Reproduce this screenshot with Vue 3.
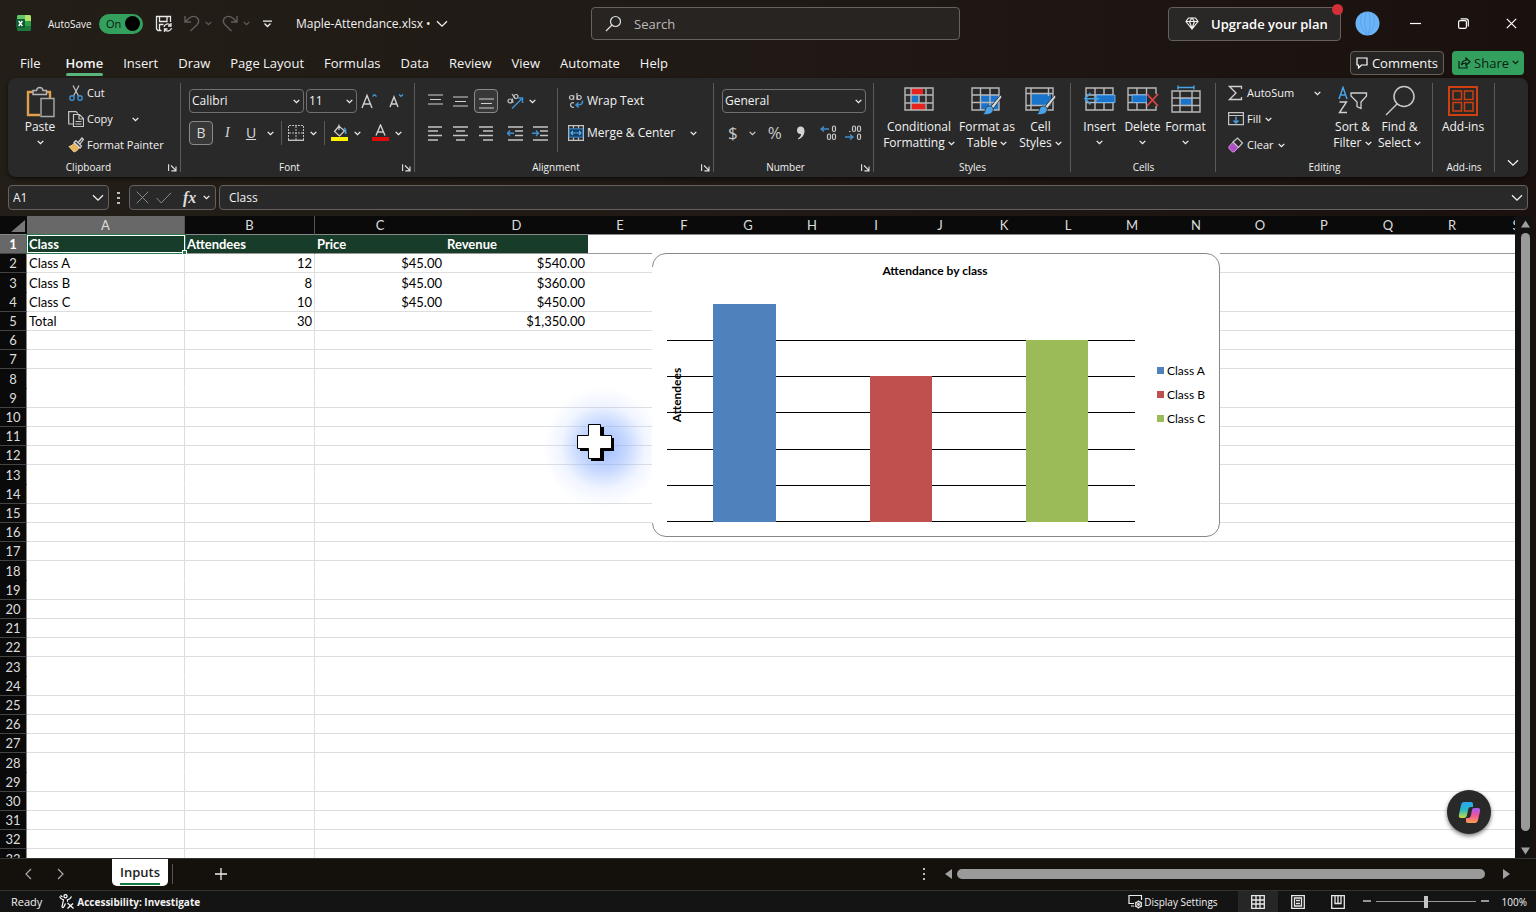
<script setup>
import { h, ref } from 'vue'

const Chev = () => h('svg', { class: 'chev', width: 7, height: 5, viewBox: '0 0 7 5', 'aria-hidden': 'true' }, [
  h('path', { d: 'M.7.9 3.5 3.7 6.3.9', fill: 'none', stroke: 'currentColor', 'stroke-width': 1.3 })
])
const BigChev = () => h('svg', { class: 'chev', width: 12, height: 8, viewBox: '0 0 12 8', 'aria-hidden': 'true' }, [
  h('path', { d: 'M1 1.2 6 6.2 11 1.2', fill: 'none', stroke: 'currentColor', 'stroke-width': 1.3 })
])
const Launcher = () => h('button', { class: 'launcher', type: 'button', 'aria-label': 'More options' }, [
  h('svg', { width: 9, height: 9, viewBox: '0 0 9 9' }, [
    h('path', { d: 'M.6 8V1.2M3 2.5l4.6 4.6M8 3.4v4.5H3.4', fill: 'none', stroke: '#e4e4e4', 'stroke-width': 1.1 })
  ])
])

const tabs = ['File', 'Home', 'Insert', 'Draw', 'Page Layout', 'Formulas', 'Data', 'Review', 'View', 'Automate', 'Help']
const columns = 'ABCDEFGHIJKLMNOPQRS'.split('')
const data = [
  ['Class', 'Attendees', 'Price', 'Revenue'],
  ['Class A', '12', '$45.00', '$540.00'],
  ['Class B', '8', '$45.00', '$360.00'],
  ['Class C', '10', '$45.00', '$450.00'],
  ['Total', '30', '', '$1,350.00']
]
const rowCount = 33
const cell = (r, c) => (data[r - 1] && data[r - 1][c]) || ''

const gridY = [87, 123, 159, 196, 232, 268]
const bars = [
  { x: 61, y: 51, w: 63, color: '#4f81bd' },
  { x: 218, y: 123, w: 62, color: '#c0504d' },
  { x: 374, y: 87, w: 62, color: '#9bbb59' }
]
const legend = [
  { label: 'Class A', color: '#4f81bd', y: 118 },
  { label: 'Class B', color: '#c0504d', y: 142 },
  { label: 'Class C', color: '#9bbb59', y: 166 }
]
const autosave = ref(true)
const formula = ref('Class')
const nameBox = ref('A1')
const zoom = ref(50)
</script>

<template>
  <div class="app">
    <header class="titlebar">
      <div class="title-left">
        <svg class="logo" width="16" height="17" viewBox="0 0 16 17" aria-hidden="true">
          <rect x="1" y="0" width="14" height="16" rx="1.5" fill="#1d7a3c" />
          <path d="M1 1.500A1.500 1.500 0 0 1 2.500 0H9v6H1z" fill="#5fc46a" />
          <path d="M9 0h4.500A1.500 1.500 0 0 1 15 1.500V6H9z" fill="#b4e36c" />
          <path d="M9 6h6v5H9z" fill="#2f9e46" />
          <rect x="0" y="4" width="9" height="9" rx="1" fill="#0f5c33" />
          <path d="M2.700 6 6.300 11M6.300 6 2.700 11" stroke="#fff" stroke-width="1.400" />
        </svg>
        <label class="autosave">
          <span>AutoSave</span>
          <input v-model="autosave" type="checkbox" />
          <span class="toggle"><span>On</span><i></i></span>
        </label>
        <button class="ib save" aria-label="Save">
          <svg width="18" height="18" viewBox="0 0 18 18" fill="none" stroke="#e8e8e8" stroke-width="1.300">
            <path d="M6.500 15.500H3L1.500 14V1.500h14V7M4.500 1.500v5h7.500v-5M4.500 15.500v-6h4" />
            <path d="M9 12a3.600 3.600 0 0 1 6.500-1.500M16 8v3h-3M16.500 13a3.600 3.600 0 0 1-6.500 1.500M9.500 17v-3h3" />
          </svg>
        </button>
        <button class="ib dim undo" aria-label="Undo">
          <svg width="16" height="17" viewBox="0 0 16 17" fill="none" stroke="currentColor" stroke-width="1.400">
            <path d="M1 1v6h6M1.500 6.500 5 3.300c3-2.800 6.500-2.300 8.300-.3 1.800 2 1.500 4.800-.3 6.700L6.500 16" />
          </svg>
          <Chev />
        </button>
        <button class="ib dim redo" aria-label="Redo">
          <svg width="16" height="17" viewBox="0 0 16 17" fill="none" stroke="currentColor" stroke-width="1.400">
            <path d="M15 1v6H9M14.500 6.500 11 3.300C8 .5 4.500 1 2.700 3c-1.800 2-1.500 4.800.3 6.700L9.500 16" />
          </svg>
          <Chev />
        </button>
        <button class="ib customize" aria-label="Customize toolbar">
          <svg width="9" height="8" viewBox="0 0 9 8" fill="none" stroke="#eee" stroke-width="1.300"><path d="M0 1.200h9M1.500 3.500l3 3 3-3" /></svg>
        </button>
        <button class="ib filename">Maple-Attendance.xlsx • <BigChev /></button>
      </div>
      <label class="search">
        <svg width="17" height="17" viewBox="0 0 17 17" fill="none" stroke="#ddd" stroke-width="1.200" aria-hidden="true"><circle cx="10.500" cy="6.500" r="5" /><path d="M7 10 1 16" /></svg>
        <input type="search" placeholder="Search" aria-label="Search" />
      </label>
      <div class="title-right">
        <button class="upgrade">
          <svg width="14" height="13" viewBox="0 0 14 13" fill="none" stroke="#eee" stroke-width="1.200"><path d="M3.500 1h7L13 4.500 7 12 1 4.500zM1 4.500h12M4.500 4.500 7 11.500l2.500-7M4.500 4.500 7 1l2.500 3.500" /></svg>
          Upgrade your plan
          <i class="dot"></i>
        </button>
        <button class="avatar" aria-label="Account">
          <svg width="25" height="25" viewBox="0 0 25 25"><circle cx="12.500" cy="12.500" r="12" fill="#6cb4f8" /><path d="M12.500 24C5 18 4 8 7.500 2.500M12.500 24C9 16 9.500 8 11 1M12.500 24C16 16 15.500 8 14 1M12.500 24C20 18 21 8 17.500 2.500" fill="none" stroke="#5ba3ec" stroke-width="1" /></svg>
        </button>
        <button class="win" aria-label="Minimize"><svg width="11" height="11" viewBox="0 0 11 11"><path d="M0 5.500h11" stroke="#fff" stroke-width="1.200" /></svg></button>
        <button class="win" aria-label="Restore"><svg width="11" height="11" viewBox="0 0 11 11" fill="none" stroke="#fff" stroke-width="1.200"><rect x=".6" y="2.600" width="7.800" height="7.800" rx="1.500" /><path d="M2.600.8H8a2.300 2.300 0 0 1 2.300 2.300v5.400" /></svg></button>
        <button class="win" aria-label="Close"><svg width="11" height="11" viewBox="0 0 11 11"><path d="m.8.8 9.400 9.400M10.200.8.8 10.200" stroke="#fff" stroke-width="1.200" /></svg></button>
      </div>
    </header>

    <nav class="tabs">
      <button v-for="t in tabs" :key="t" :class="{ active: t === 'Home', file: t === 'File' }">{{ t }}</button>
      <span class="grow"></span>
      <button class="comments">
        <svg width="12" height="12" viewBox="0 0 12 12" fill="none" stroke="#fff" stroke-width="1.200"><path d="M1 1h10v7H5.500L2.500 11V8H1z" /></svg>
        Comments
      </button>
      <button class="share">
        <svg width="13" height="12" viewBox="0 0 13 12" fill="none" stroke="#0b1d12" stroke-width="1.200"><path d="M1 4v7h8V9M3.500 8c.3-3 2-4.500 4.500-4.500V1l4 3.700-4 3.600V6C6 6 4.500 6.500 3.500 8z" /></svg>
        Share <Chev />
      </button>
    </nav>

    <section class="ribbon" aria-label="Home ribbon">
      <div class="group g-clip">
        <div class="body">
          <button class="big paste">
            <svg width="29" height="32" viewBox="0 0 29 32" fill="none">
              <path d="M8 6H2v23h12M20 6h4v6" stroke="#e0a04c" stroke-width="2.400" />
              <path d="M7 8.500V4.500h3.500C11 .5 16.500.5 17 4.500h3.500v4z" stroke="#b8b8b8" stroke-width="1.400" fill="#333" />
              <path d="M15 12.500h13v18H15z" stroke="#aaa" stroke-width="1.400" fill="#292929" />
            </svg>
            <span>Paste</span><Chev />
          </button>
          <div class="stack">
            <button class="row">
              <svg width="16" height="16" viewBox="0 0 16 16" fill="none"><path d="M5 .5 10.500 11M11 .5 5.500 11" stroke="#c8c8c8" stroke-width="1.200" /><circle cx="4" cy="13" r="2.200" stroke="#3f8fcf" stroke-width="1.400" /><circle cx="12" cy="13" r="2.200" stroke="#3f8fcf" stroke-width="1.400" /></svg>
              Cut
            </button>
            <button class="row">
              <svg width="16" height="16" viewBox="0 0 16 16" fill="none" stroke="#c8c8c8" stroke-width="1.200"><path d="M5 13H.7V.7H8l2 2" /><path d="M5.500 3.500h6l4 4v8h-10zM11 3.500v4.500h4.500M7.500 10.500h6M7.500 13h6" /></svg>
              Copy <Chev />
            </button>
            <button class="row">
              <svg width="16" height="16" viewBox="0 0 16 16" fill="none"><path d="M1 9.500 6 15c2-.5 4.500-2.500 5.500-4.500L6.500 6C5 8 3 9 1 9.500z" fill="#e8b458" stroke="#f0cf93" /><path d="m6 5.500 6 5.500 1.500-2L8 3.500zM10.500 5 14 1l1.500 1.500L12 7" stroke="#d8d8d8" stroke-width="1.200" fill="#444" /></svg>
              Format Painter
            </button>
          </div>
        </div>
        <footer>Clipboard<Launcher /></footer>
      </div>

      <div class="group g-font">
        <div class="body col">
          <div class="line">
            <label class="pick w114"><select aria-label="Font"><option>Calibri</option></select><Chev /></label>
            <label class="pick w50"><select aria-label="Font size"><option>11</option></select><Chev /></label>
            <button class="ib growf" aria-label="Increase font size"><svg width="16" height="16" viewBox="0 0 16 16" fill="none"><path d="M1 15 6 2.500 11 15M2.800 11h6.400" stroke="#d0d0d0" stroke-width="1.400" /><path d="m11.500 3.500 2-2 2 2" stroke="#4a9bd8" stroke-width="1.200" /></svg></button>
            <button class="ib shrinkf" aria-label="Decrease font size"><svg width="15" height="16" viewBox="0 0 15 16" fill="none"><path d="m1 14 4-10 4 10M2.500 11h5" stroke="#d0d0d0" stroke-width="1.400" /><path d="m10 1.500 2 2 2-2" stroke="#4a9bd8" stroke-width="1.200" /></svg></button>
          </div>
          <div class="line">
            <button class="sq on"><span class="bold">B</span></button>
            <button class="ib it">I</button>
            <button class="ib ul"><u>U</u></button>
            <button class="ib" aria-label="Underline options"><Chev /></button>
            <i class="vs"></i>
            <button class="ib bord" aria-label="Borders"><svg width="16" height="16" viewBox="0 0 16 16" fill="none" stroke="#c0c0c0"><path d="M.5 15V.5h15V15M8 1v14M1 8h14" stroke-dasharray="2 1" /><path d="M0 15.300h16" stroke-width="1.400" /></svg><Chev /></button>
            <i class="vs"></i>
            <button class="ib fillc" aria-label="Fill color"><svg width="17" height="18" viewBox="0 0 17 18" fill="none"><path d="M8 2 3.500 7.500l5 4.500 5-5zM8 2V.5M8 2v4" stroke="#d0d0d0" stroke-width="1.200" /><path d="M13 4c1.500 1 2 3 1.500 6" stroke="#4a9bd8" stroke-width="1.600" /><path d="M0 13h17v4H0z" fill="#fff200" /></svg><Chev /></button>
            <button class="ib fontc" aria-label="Font color"><svg width="17" height="18" viewBox="0 0 17 18" fill="none"><path d="M4 11.500 8.500 1 13 11.500M5.500 8h6" stroke="#d0d0d0" stroke-width="1.400" /><path d="M0 13h17v4H0z" fill="#e00b0b" /></svg><Chev /></button>
          </div>
        </div>
        <footer>Font<Launcher /></footer>
      </div>

      <div class="group g-align">
        <div class="body">
          <div class="col aligns">
            <div class="line">
              <button class="sq high" aria-label="Top align"><svg width="15" height="15" viewBox="0 0 15 15" stroke="#d0d0d0" stroke-width="1.200"><path d="M0 1h15M2 5.500h11M0 10h15" /></svg></button>
              <button class="sq" aria-label="Middle align"><svg width="15" height="15" viewBox="0 0 15 15" stroke="#d0d0d0" stroke-width="1.200"><path d="M0 3h15M2 7.500h11M0 12h15" /></svg></button>
              <button class="sq on" aria-label="Bottom align"><svg width="15" height="15" viewBox="0 0 15 15" stroke="#d0d0d0" stroke-width="1.200"><path d="M0 5h15M2 9.500h11M0 14h15" /></svg></button>
              <button class="sq wide" aria-label="Orientation"><svg width="17" height="16" viewBox="0 0 17 16" fill="none"><g stroke="#c8c8c8" stroke-width="1.200"><circle cx="3" cy="8" r="2" /><path d="M5.300 5.500 6 10M5 1l3.500 5" /><circle cx="9" cy="3.500" r="2" /></g><path d="m5 15.500 10-10M10.500 5H15.500v5" stroke="#3f8fcf" stroke-width="1.500" /></svg><Chev /></button>
            </div>
            <div class="line">
              <button class="sq" aria-label="Align left"><svg width="15" height="15" viewBox="0 0 15 15" stroke="#c4c4c4" stroke-width="1.600"><path d="M0 1h14M0 5h10M0 9.500h14M0 14h10" /></svg></button>
              <button class="sq" aria-label="Center"><svg width="15" height="15" viewBox="0 0 15 15" stroke="#c4c4c4" stroke-width="1.600"><path d="M0 1h15M3 5h9M0 9.500h15M3 14h9" /></svg></button>
              <button class="sq" aria-label="Align right"><svg width="15" height="15" viewBox="0 0 15 15" stroke="#c4c4c4" stroke-width="1.600"><path d="M1 1h14M5 5h10M1 9.500h14M5 14h10" /></svg></button>
              <button class="sq ind" aria-label="Decrease indent"><svg width="16" height="15" viewBox="0 0 16 15" fill="none" stroke="#c4c4c4" stroke-width="1.600"><path d="M1 1h15M8 5h8M8 9.500h8M1 14h15" /><path d="M0 7.300h7M3 4.500.5 7.300 3 10" stroke="#3f8fcf" stroke-width="1.400" /></svg></button>
              <button class="sq" aria-label="Increase indent"><svg width="16" height="15" viewBox="0 0 16 15" fill="none" stroke="#c4c4c4" stroke-width="1.600"><path d="M1 1h15M8 5h8M8 9.500h8M1 14h15" /><path d="M0 7.300h7M4 4.500l2.500 2.800L4 10" stroke="#3f8fcf" stroke-width="1.400" /></svg></button>
            </div>
          </div>
          <i class="vs tall"></i>
          <div class="col wraps">
            <button class="row">
              <svg width="16" height="16" viewBox="0 0 16 16" fill="none"><g stroke="#c8c8c8" stroke-width="1.200"><circle cx="3.500" cy="4.500" r="2" /><path d="M5.700 2.300v4.500M9 0v7M6 10a2.300 2.300 0 1 0 0 4" /><circle cx="11.200" cy="4.500" r="2" /></g><path d="M14.500 7.500c.5 3.500-1.500 4.500-6 4.500M10.500 9.500 8 12l2.500 2.500" stroke="#3f8fcf" stroke-width="1.600" /></svg>
              Wrap Text
            </button>
            <button class="row merge">
              <svg width="16" height="16" viewBox="0 0 16 16" fill="none"><path d="M.6.6h14.800v14.800H.6zM5.500.6v3M10.500.6v3M5.500 12.500v3M10.500 12.500v3" stroke="#c4c4c4" stroke-width="1.200" /><path d="M1.200 3.800h13.600v8.400H1.200z" fill="#123f63" stroke="#3f8fcf" stroke-width="1" /><path d="M3 8h10M5 6 3 8l2 2M11 6l2 2-2 2" stroke="#5cb0ee" stroke-width="1.200" /></svg>
              Merge &amp; Center <Chev />
            </button>
          </div>
        </div>
        <footer>Alignment<Launcher /></footer>
      </div>

      <div class="group g-num">
        <div class="body col">
          <label class="pick w144"><select aria-label="Number format"><option>General</option></select><Chev /></label>
          <div class="line">
            <button class="ib cur">$<Chev /></button>
            <button class="ib pct">%</button>
            <button class="ib comma" aria-label="Comma style"><svg width="9" height="14" viewBox="0 0 9 14"><path d="M4.500.5C7 .5 8.500 2 8.500 5c0 4-2.500 7-6 8.500L2 12.300c2-1 3-2.500 3-4.300C2.500 8.300 1 6.500 1 4.200 1 2 2.500.5 4.500.5z" fill="#d4d4d4" /></svg></button>
            <i class="vs"></i>
            <button class="ib dec" aria-label="Increase decimal"><svg width="17" height="16" viewBox="0 0 17 16" fill="none"><path d="M9 4H1M4 1.500 1 4l3 2.500" stroke="#3f8fcf" stroke-width="1.400" /><g stroke="#c8c8c8" stroke-width="1.200"><rect x="12.500" y="1" width="3" height="5.500" rx="1.500" /><rect x="7.500" y="9" width="3" height="5.500" rx="1.500" /><rect x="12.500" y="9" width="3" height="5.500" rx="1.500" /></g></svg></button>
            <button class="ib dec" aria-label="Decrease decimal"><svg width="17" height="16" viewBox="0 0 17 16" fill="none"><path d="M0 12h8M5 9.500 8 12l-3 2.500" stroke="#3f8fcf" stroke-width="1.400" /><g stroke="#c8c8c8" stroke-width="1.200"><rect x="12.500" y="1" width="3" height="5.500" rx="1.500" /><rect x="7.500" y="1" width="3" height="5.500" rx="1.500" /><path d="M4 6.500h1.500" /><rect x="12.500" y="9" width="3" height="5.500" rx="1.500" /></g></svg></button>
          </div>
        </div>
        <footer>Number<Launcher /></footer>
      </div>

      <div class="group g-styles">
        <div class="body">
          <button class="big w80">
            <svg width="30" height="26" viewBox="0 0 30 26"><path d="M1 2h28v22H1z" fill="#2f2f2f" /><path d="M7 2h12v7H7zM7 17h14v7H7z" fill="#e8221c" /><path d="M7 9h8v8H7z" fill="#1a74cc" /><path d="M1 2h28v22H1zM1 9h28M1 17h28M7 2v22M22 2v22M15 9v8" fill="none" stroke="#b8b8b8" stroke-width="1.400" /></svg>
            <span>Conditional<br />Formatting <Chev /></span>
          </button>
          <button class="big w56">
            <svg width="32" height="30" viewBox="0 0 32 30" fill="none"><path d="M10 9h18v15H10z" fill="#1a74cc" /><path d="M1 2h27v22H1zM1 9h27M1 16.500h27M9.500 2v22M19 2v22" stroke="#b8b8b8" stroke-width="1.400" /><path d="m29.500 9-10 12 2.500 2 9-12z" fill="#d8d8d8" stroke="#292929" stroke-width=".8" /><path d="M18 20c3 0 5 2 4 5s-5 4-11 3.500c3-1 2.500-3 3.500-5.500.7-2 2-3 3.500-3z" fill="#4aa3e6" stroke="#292929" stroke-width=".8" /></svg>
            <span>Format as<br />Table <Chev /></span>
          </button>
          <button class="big w48">
            <svg width="32" height="30" viewBox="0 0 32 30" fill="none"><path d="M6 8h20v12H6z" fill="#1a74cc" /><path d="M1 2h27v22H1zM1 7.500h27M1 19.500h20M6 2v22M23.500 2v8" stroke="#b8b8b8" stroke-width="1.400" /><path d="m29.500 9-10 12 2.500 2 9-12z" fill="#d8d8d8" stroke="#292929" stroke-width=".8" /><path d="M18 20c3 0 5 2 4 5s-5 4-11 3.500c3-1 2.500-3 3.500-5.500.7-2 2-3 3.500-3z" fill="#4aa3e6" stroke="#292929" stroke-width=".8" /></svg>
            <span>Cell<br />Styles <Chev /></span>
          </button>
        </div>
        <footer>Styles</footer>
      </div>

      <div class="group g-cells">
        <div class="body">
          <button class="big w44">
            <svg width="32" height="26" viewBox="0 0 32 26" fill="none"><path d="M2 2h27v22H2zM2 9h27M2 16.500h27M11 2v22M20 2v22" stroke="#b8b8b8" stroke-width="1.400" /><path d="M12 9h19v7.500H12z" fill="#1a74cc" stroke="#7cc0f5" stroke-width=".8" /><path d="M15 12.700H1M6.500 7 1 12.700l5.500 5.700" stroke="#4aa3e6" stroke-width="1.600" /></svg>
            <span>Insert</span><Chev />
          </button>
          <button class="big w44">
            <svg width="32" height="26" viewBox="0 0 32 26" fill="none"><path d="M1 2h28v22H1zM1 9h28M1 16.500h28M10 2v22M19.500 2v22" stroke="#b8b8b8" stroke-width="1.400" /><path d="M5 9h15v7.500H5z" fill="#1a74cc" stroke="#7cc0f5" stroke-width=".8" /><path d="M20 8h12v12H20z" fill="#292929" /><path d="m20 8 11 12M31 8 20 20" stroke="#e04444" stroke-width="1.800" /></svg>
            <span>Delete</span><Chev />
          </button>
          <button class="big w44 fmt">
            <svg width="32" height="30" viewBox="0 0 32 30" fill="none"><path d="M8 2.500h16M8 .5v4M24 .5v4" stroke="#4aa3e6" stroke-width="1.400" /><path d="M10 13h12v7.500H10z" fill="#1a74cc" /><path d="M2 6h28v21H2zM2 13h28M2 20.500h28M10 6v21M22 6v21" stroke="#b8b8b8" stroke-width="1.400" /></svg>
            <span>Format</span><Chev />
          </button>
        </div>
        <footer>Cells</footer>
      </div>

      <div class="group g-edit">
        <div class="body">
          <div class="stack">
            <button class="row autosum">
              <svg width="16" height="16" viewBox="0 0 16 16" fill="none"><path d="M13.500 4V1.500h-12L8 8l-6.500 6.500h12V12" stroke="#d0d0d0" stroke-width="1.300" /></svg>
              AutoSum <Chev />
            </button>
            <button class="row">
              <svg width="16" height="16" viewBox="0 0 16 16" fill="none"><path d="M.6 1.600h14.800v12H.6zM.6 4.500h14.800" stroke="#c4c4c4" stroke-width="1.200" /><path d="M8 5.500v6.500M5.500 9.500 8 12l2.500-2.500" stroke="#4aa3e6" stroke-width="1.400" /></svg>
              Fill <Chev />
            </button>
            <button class="row">
              <svg width="16" height="16" viewBox="0 0 16 16" fill="none"><path d="m1 9.500 4-4.500 5.500 5.500L6 15H4.500L1 11.500z" fill="#b04fc4" stroke="#d98be6" /><path d="m5 5 4.500-4 5 5-4 4.500z" stroke="#c8c8c8" stroke-width="1.200" /></svg>
              Clear <Chev />
            </button>
          </div>
          <button class="big w48 sort">
            <svg width="30" height="28" viewBox="0 0 30 28" fill="none"><path d="m1 13 4-11.500L9 13M2.500 9h5" stroke="#4aa3e6" stroke-width="1.500" /><path d="M1.500 16h7L1.500 26.500h7.500" stroke="#d0d0d0" stroke-width="1.400" /><path d="M13 7h15.500v3L23 16v6.500l-4-2V16l-6-6z" stroke="#d0d0d0" stroke-width="1.300" /></svg>
            <span>Sort &amp;<br />Filter <Chev /></span>
          </button>
          <button class="big w48 find">
            <svg width="30" height="31" viewBox="0 0 30 31" fill="none" stroke="#c8c8c8" stroke-width="1.500"><circle cx="19" cy="11.500" r="10" /><path d="M12 19 1 30" /></svg>
            <span>Find &amp;<br />Select <Chev /></span>
          </button>
        </div>
        <footer>Editing</footer>
      </div>

      <div class="group g-add">
        <div class="body">
          <button class="big w60">
            <svg width="30" height="30" viewBox="0 0 30 30" fill="none" stroke="#cf3f10" stroke-width="1.500"><path d="M1 1h28v28H1z" stroke-width="2" /><path d="M5 5h8.500v8.500H5zM16.500 5H25v8.500h-8.500zM5 16.500h8.500V25H5zM16.500 16.500H25V25h-8.500z" /></svg>
            <span>Add-ins</span>
          </button>
        </div>
        <footer>Add-ins</footer>
      </div>
      <button class="ib collapse" aria-label="Collapse ribbon"><BigChev /></button>
    </section>

    <section class="fbar" aria-label="Formula bar">
      <div class="box namebox"><input v-model="nameBox" aria-label="Name box" /><BigChev /></div>
      <svg class="dots" width="3" height="12" viewBox="0 0 3 12" fill="#bbb" aria-hidden="true"><path d="M0 0h3v2H0zM0 5h3v2H0zM0 10h3v2H0z" /></svg>
      <div class="box fxbox">
        <button class="ib dim2" aria-label="Cancel"><svg width="13" height="13" viewBox="0 0 13 13"><path d="m.7.7 11.600 11.600M12.300.7.7 12.300" stroke="currentColor" /></svg></button>
        <button class="ib dim2" aria-label="Enter"><svg width="16" height="12" viewBox="0 0 16 12" fill="none"><path d="m.7 6 4.500 5L15 .8" stroke="currentColor" /></svg></button>
        <button class="ib fx">fx</button>
        <button class="ib" aria-label="Function list"><Chev /></button>
      </div>
      <div class="box finput"><input v-model="formula" aria-label="Formula" /><BigChev /></div>
    </section>

    <main class="work">
      <div class="sheet">
        <table>
          <colgroup><col class="c-h" /><col class="c-a" /><col class="c-b" /><col class="c-b" /><col class="c-d" /><col v-for="n in 15" :key="n" class="c-n" /></colgroup>
          <thead>
            <tr>
              <th class="corner" aria-label="Select all"><svg width="14" height="14" viewBox="0 0 14 14"><path d="M14 0v12H0z" fill="#777" /></svg></th>
              <th v-for="c in columns" :key="c" scope="col" :class="{ picked: c === 'A', edge: c === 'A' || c === 'B' }">{{ c }}</th>
            </tr>
          </thead>
          <tbody>
            <tr v-for="r in rowCount" :key="r" :class="{ head: r === 1 }">
              <th scope="row">{{ r }}</th>
              <td v-for="(c, i) in columns" :key="c" :class="{ num: r > 1 && i > 0, vline: i < 2 }">{{ cell(r, i) }}</td>
            </tr>
          </tbody>
        </table>
        <span class="selection"><i></i></span>
        <span class="glow"></span>
        <svg class="cursor" width="38" height="38" viewBox="0 0 38 38" aria-hidden="true">
          <path d="M14 3h13v11h10v13H27v10H14V27H3V14h11z" fill="#000" />
          <path d="M11.500.5h12v11h11v13h-11v10h-12v-10H.5v-13h11z" fill="#fff" stroke="#000" />
        </svg>
        <figure class="chart">
          <svg width="568" height="284" viewBox="0 0 568 284" role="img" aria-label="Attendance by class">
            <path d="M0 0h568v284H0z" fill="#fff" />
            <path d="M.5 14A13.500 13.500 0 0 1 14 .5h540A13.500 13.500 0 0 1 567.500 14v256a13.500 13.500 0 0 1-13.500 13.500H14A13.500 13.500 0 0 1 .5 270" fill="none" stroke="#888" />
            <path v-for="y in gridY" :key="y" :d="`M15 ${y}h468v1H15z`" fill="#000" />
            <rect v-for="b in bars" :key="b.x" :x="b.x" :y="b.y" :width="b.w" :height="269 - b.y" :fill="b.color" />
            <text class="ct" x="283" y="22" text-anchor="middle">Attendance by class</text>
            <text class="ct" x="-142" y="29" text-anchor="middle" transform="rotate(-90)">Attendees</text>
            <template v-for="l in legend" :key="l.label">
              <rect x="505" :y="l.y - 4" width="7" height="7" :fill="l.color" />
              <text class="cl" x="515" :y="l.y + 4">{{ l.label }}</text>
            </template>
          </svg>
        </figure>
        <button class="copilot" aria-label="Copilot">
          <svg width="23" height="23" viewBox="0 0 23 23">
            <defs>
              <linearGradient id="ca" x1="0" y1="0" x2="0" y2="1"><stop offset="0" stop-color="#2aa4f4" /><stop offset=".5" stop-color="#2cb8c4" /><stop offset="1" stop-color="#c8dc3c" /></linearGradient>
              <linearGradient id="cb" x1="0" y1="0" x2="0" y2="1"><stop offset="0" stop-color="#a45cf0" /><stop offset=".5" stop-color="#f0559a" /><stop offset="1" stop-color="#fba04c" /></linearGradient>
            </defs>
            <path d="M6 1h7c1.500 0 2 1 2 2v3h-2c-2 0-2.500 1-3 3l-1 5c-.5 2-1.500 3-3 3H3c-2 0-2.500-1.500-2-3.500L3 4c.5-2 1.500-3 3-3z" fill="url(#ca)" />
            <path d="M17 22h-7c-1.500 0-2-1-2-2v-3h2c2 0 2.500-1 3-3l1-5c.5-2 1.500-2 3-2h3c2 0 2.500 1.500 2 3.500L20 19c-.5 2-1.500 3-3 3z" fill="url(#cb)" />
          </svg>
        </button>
      </div>
      <div class="vscroll">
        <svg width="9" height="8" viewBox="0 0 9 8"><path d="M4.500.5 9 7.500H0z" fill="#a0a0a0" /></svg>
        <span class="thumb"></span>
        <svg class="down" width="9" height="8" viewBox="0 0 9 8"><path d="M4.500 7.500 9 .5H0z" fill="#a0a0a0" /></svg>
      </div>
    </main>

    <div class="sheettabs">
      <button class="ib nav" aria-label="Previous sheet"><svg width="7" height="12" viewBox="0 0 7 12" fill="none" stroke="#aaa" stroke-width="1.200"><path d="M6 1 1 6l5 5" /></svg></button>
      <button class="ib nav" aria-label="Next sheet"><svg width="7" height="12" viewBox="0 0 7 12" fill="none" stroke="#aaa" stroke-width="1.200"><path d="m1 1 5 5-5 5" /></svg></button>
      <button class="sheettab"><span>Inputs</span></button>
      <i class="tabsep"></i>
      <button class="ib add" aria-label="New sheet"><svg width="12" height="12" viewBox="0 0 12 12"><path d="M6 0v12M0 6h12" stroke="#eee" stroke-width="1.300" /></svg></button>
      <div class="hscroll">
        <svg width="3" height="12" viewBox="0 0 3 12" fill="#bbb"><path d="M0 0h2v2H0zM0 5h2v2H0zM0 10h2v2H0z" /></svg>
        <svg class="la" width="7" height="10" viewBox="0 0 7 10"><path d="M7 0v10L0 5z" fill="#a0a0a0" /></svg>
        <span class="hthumb"></span>
        <svg class="ra" width="7" height="10" viewBox="0 0 7 10"><path d="M0 0v10l7-5z" fill="#a0a0a0" /></svg>
      </div>
    </div>

    <footer class="status">
      <span class="ready">Ready</span>
      <button class="ib acc">
        <svg width="15" height="15" viewBox="0 0 15 15" fill="none" stroke="#fff" stroke-width="1.200"><circle cx="6.500" cy="2.200" r="1.600" /><path d="M.5 2.500c1 2.500 2.500 3 4 3.300L3 13c1 1.500 2 0 3.500-3.500M12.500 2.500c-1 2.500-2.500 3-4 3.300v2M8.500 9l6 5.500M14 9.500l-5.500 5M1.500 1.500 3.500 3" /></svg>
        Accessibility: Investigate
      </button>
      <span class="grow"></span>
      <button class="ib disp">
        <svg width="15" height="15" viewBox="0 0 15 15" fill="none" stroke="#eee" stroke-width="1.200"><path d="M6 9.500H1V1.500h12.500V6M3 12h3" /><circle cx="10.500" cy="10.500" r="2.800" /><circle cx="10.500" cy="10.500" r=".8" /><path d="M10.500 6.500v1.200M10.500 13.300v1.200M7 8.500l1 .6M13 12l1 .6M14 8.500l-1 .6M8 12l-1 .6" /></svg>
        Display Settings
      </button>
      <button class="view on" aria-label="Normal view"><svg width="14" height="14" viewBox="0 0 14 14" fill="none" stroke="#e8e8e8" stroke-width="1.300"><path d="M.7.700h12.600v12.600H.7zM5 1v12M9 1v12M1 5h12M1 9h12" /></svg></button>
      <button class="view" aria-label="Page layout view"><svg width="14" height="14" viewBox="0 0 14 14" fill="none" stroke="#e8e8e8" stroke-width="1.300"><path d="M.7.700h12.600v12.600H.7zM3.500 3h7v8h-7zM5 5.500h4M5 8.500h4" /></svg></button>
      <button class="view" aria-label="Page break view"><svg width="14" height="14" viewBox="0 0 14 14" fill="none" stroke="#e8e8e8" stroke-width="1.300"><path d="M.7.700h12.600v12.600H.7zM4 1v7.500h6V1M7 1v7.500" /></svg></button>
      <button class="ib zb" aria-label="Zoom out"><svg width="8" height="3" viewBox="0 0 8 3"><path d="M0 1h8" stroke="#eee" stroke-width="1.200" /></svg></button>
      <input v-model="zoom" class="zoom" type="range" min="0" max="100" aria-label="Zoom" />
      <button class="ib zb" aria-label="Zoom in"><svg width="8" height="3" viewBox="0 0 8 3"><path d="M0 1h8" stroke="#eee" stroke-width="1.200" /></svg></button>
      <button class="ib pc">100%</button>
    </footer>
  </div>
</template>

<style>
html, body { margin: 0; background: #14100c; }
</style>

<style scoped>
.app { height: 100vh; display: flex; flex-direction: column; overflow: hidden; color: #f2f2f2; font: 11px/16px "Open Sans", "Noto Sans", sans-serif; background: linear-gradient(90deg, #231e18, #201915 50%, #1a110f); }
.app * { box-sizing: border-box; }
button, input, select { font: inherit; color: inherit; background: none; border: 0; padding: 0; margin: 0; outline: 0; }
button { display: flex; align-items: center; white-space: nowrap; }
svg { flex: none; display: block; }
.grow { flex: 1; }

.titlebar { flex: none; height: 47px; display: grid; grid-template-columns: minmax(0, 591fr) minmax(0, 369fr) minmax(0, 576fr); align-items: center; }
.title-left { display: flex; align-items: center; height: 47px; padding-left: 16px; }
.autosave { display: flex; align-items: center; gap: 8px; margin-left: 16px; position: relative; }
.autosave > span:first-child { width: 43px; white-space: nowrap; font-size: 10px; }
.autosave input { position: absolute; opacity: 0; right: 0; width: 44px; height: 20px; }
.toggle { display: flex; align-items: center; justify-content: space-between; width: 44px; height: 20px; border-radius: 10px; background: #34a05e; color: #0c1a11; padding: 0 3px 0 7px; }
.toggle i { width: 15px; height: 15px; border-radius: 50%; background: #000; }
.save { margin-left: 12px; }
.dim { color: #625d59; gap: 5px; }
.undo { margin-left: 11px; }
.redo { margin-left: 10px; }
.customize { margin-left: 13px; }
.filename { margin-left: 24px; gap: 5px; font-size: 12px; }
.search { display: flex; align-items: center; gap: 12px; height: 33px; padding: 0 13px; border: 1px solid #68625e; border-radius: 4px; background: #282422; }
.search input { flex: 1; min-width: 0; font-size: 13px; appearance: none; }
.search input::placeholder { color: #bdbab8; opacity: 1; }
.title-right { display: flex; align-items: center; justify-content: flex-end; height: 47px; padding-right: 1px; }
.upgrade { position: relative; width: 173px; height: 34px; padding-left: 16px; gap: 12px; border: 1px solid #66605d; border-radius: 4px; background: #2a2827; font-size: 13px; font-weight: 600; color: #fff; }
.dot { position: absolute; right: -3px; top: -4px; width: 11px; height: 11px; border-radius: 50%; background: #d32f36; }
.avatar { margin: 0 11px 0 14px; }
.win { width: 48px; height: 47px; justify-content: center; }

.tabs { flex: none; height: 31px; display: flex; align-items: center; gap: 20px; padding: 0 12px 0 20px; font-size: 13px; color: #f4f4f4; }
.tabs button { height: 24px; }
.tabs .file { margin-right: 5px; }
.tabs .active { font-weight: 600; position: relative; }
.tabs .active::after { content: ""; position: absolute; left: 0; right: 0; bottom: -1px; height: 3px; border-radius: 2px; background: #58b57c; }
.tabs .comments { gap: 4px; padding: 0 5px; border: 1px solid #66605d; border-radius: 4px; background: #262423; }
.tabs .share { gap: 3px; margin-left: -12px; padding: 0 5px 0 6px; border-radius: 4px; background: #34a05e; color: #0b1d12; }

.ribbon { flex: none; height: 99px; margin: 0 8px; display: flex; border-radius: 8px; background: #292929; box-shadow: 0 2px 4px #0008; }
.group { position: relative; flex: none; display: flex; flex-direction: column; padding: 7px 7px 0; }
.group::after { content: ""; position: absolute; right: 0; top: 5px; bottom: 5px; width: 1px; background: #5a5a5a; }
.g-clip { width: 173px; } .g-font { width: 234px; } .g-align { width: 299px; } .g-num { width: 160px; }
.g-styles { width: 197px; } .g-cells { width: 145px; } .g-edit { width: 217px; } .g-add { width: 62px; }
.g-clip, .g-font, .g-align, .g-num { padding-left: 8px; }
.group .body { flex: 1; display: flex; }
.group .col { display: flex; flex-direction: column; gap: 8px; padding-top: 4px; }
.group footer { flex: none; height: 18px; text-align: center; font-size: 10px; line-height: 16px; position: relative; }
.g-clip footer { padding-right: 13px; }
.g-font footer, .g-align footer, .g-num footer { padding-right: 18px; }
.launcher { position: absolute; right: -3px; top: 4px; }
.line { display: flex; align-items: center; height: 24px; }
.big { flex-direction: column; flex: none; height: 66px; padding-top: 1px; text-align: center; line-height: 16px; font-size: 12px; }
.big span { height: 32px; margin-top: auto; }
.big .chev { display: inline-block; vertical-align: middle; }
.big > .chev { display: block; margin: -11px 0 6px; }
.w80 { width: 76px; } .w56 { width: 60px; } .w48 { width: 47px; } .w44 { width: 43px; } .w60 { width: 46px; }
.stack { display: flex; flex-direction: column; gap: 10px; }
.row { height: 16px; gap: 3px; font-size: 12px; }
.stack .row { font-size: 11px; }
.paste { width: 48px; }
.g-clip .stack { margin-left: 4px; }
.g-clip .stack .chev { margin-left: 16px; }

.pick { position: relative; display: block; height: 24px; border: 1px solid #707070; border-radius: 4px; }
.pick select { appearance: none; width: 100%; height: 22px; padding-left: 2px; font-size: 12px; }
.pick .chev { position: absolute; right: 3px; top: 9px; pointer-events: none; }
.w114 { width: 115px; } .w50 { width: 51px; margin-left: 2px; } .w144 { width: 144px; }
.g-font .growf { margin-left: 4px; }
.g-font .shrinkf { margin-left: 12px; }
.sq { width: 25px; height: 24px; justify-content: center; }
.sq.on { border: 1px solid #8a8a8a; border-radius: 4px; background: #383838; width: 24px; }
.bold, .it, .ul { font-size: 14px; color: #d8d8d8; }
.it { font-family: "Liberation Serif", serif; font-style: italic; margin-left: 12px; width: 8px; }
.ul { margin: 0 10px 0 12px; width: 12px; justify-content: center; }
.vs { width: 1px; height: 24px; background: #5a5a5a; margin: 0 6px 0 7px; }
.bord { gap: 6px; }
.fillc, .fontc { gap: 6px; }
.fontc { margin-left: 11px; }
.aligns { width: 134px; }
.aligns .sq.on { margin-left: 1px; }
.wide { width: 46px; gap: 5px; }
.ind { margin-left: 4px; }
.vs.tall { height: 64px; margin: 3px 11px 0 0; }
.wraps .row { height: 24px; }
.wraps { margin-left: -1px; }
.merge .chev { margin-left: 12px; }
.cur, .pct { font-size: 17px; color: #c8c8c8; }
.cur { margin-left: 6px; gap: 11px; }
.pct { margin-left: 12px; }
.comma { margin-left: 14px; }
.g-num .vs { margin: 0 5px 0 10px; }
.dec { margin-right: 8px; }
.fmt, .find { padding-top: 0; }
.g-edit .stack { width: 101px; margin-left: 5px; }
.g-edit .row .chev { margin-left: 1px; }
.g-edit .autosum .chev { margin-left: 17px; }
.collapse { margin: auto 9px 10px auto; }

.fbar { flex: none; height: 25px; margin: 8px 8px 6px; display: flex; align-items: center; }
.box { display: flex; align-items: center; height: 25px; border: 1px solid #66615e; border-radius: 4px; background: #292929; }
.box input { flex: 1; min-width: 0; font-size: 12px; }
.namebox { width: 101px; padding: 0 4px; }
.dots { margin: 0 9px 0 8px; }
.fxbox { width: 87px; padding: 0 3px 0 6px; gap: 7px; }
.dim2 { color: #8a8a8a; }
.fx { font: italic bold 16px/20px "Liberation Serif", serif; color: #ddd; margin-left: 4px; }
.finput { flex: 1; margin-left: 3px; padding: 0 4px 0 9px; }

.work { flex: 1; min-height: 0; display: flex; background: #111; }
.sheet { position: relative; flex: 1; min-width: 0; overflow: hidden; background: #fff; color: #000; }
table { table-layout: fixed; width: 1548px; border-collapse: separate; border-spacing: 0; font: 13px/18px Lato, "Open Sans", sans-serif; }
.c-h { width: 27px; } .c-a { width: 158px; } .c-b { width: 130px; } .c-d { width: 143px; } .c-n { width: 64px; }
th, td { padding: 0; overflow: hidden; white-space: nowrap; }
thead th { height: 19px; background: #0a0a0a; color: #ddd; font-weight: 400; border-bottom: 1px solid #888; }
thead .edge { border-right: 1px solid #555; }
thead .picked { background: #686868; }
.corner svg { margin: 3px 0 0 11px; height: 14px; }
tbody th { height: 19px; background: #0a0a0a; color: #ddd; font-weight: 400; border-right: 1px solid #888; border-bottom: 1px solid #444; }
tbody td { height: 19px; padding: 0 3px 0 2px; border-bottom: 1px solid #dedede; }
tbody tr:nth-child(5n+3) th, tbody tr:nth-child(5n+3) td { height: 20px; border-bottom-color: transparent; }
td.vline { border-right: 1px solid #dedede; padding-right: 2px; }
td.num { text-align: right; }
.head th { background: #686868; color: #fff; font-weight: 700; }
tbody .head td { border-bottom-color: #999; font-weight: 700; }
.head td:nth-child(-n+5) { background: #183c2a; color: #fff; border-right-color: #183c2a; }
.selection { position: absolute; left: 26px; top: 18px; width: 160px; height: 20px; border: 1px solid #2a7a4e; box-shadow: inset 0 0 0 1px #fff; }
.selection i { position: absolute; right: -2px; bottom: -2px; width: 5px; height: 5px; background: #1f7a48; border: 1px solid #fff; }
.glow { position: absolute; left: 543px; top: 171px; width: 120px; height: 120px; background: radial-gradient(closest-side, #6e9dffb0 0%, #8fb2ff80 40%, #b9cfff38 70%, #fff0 100%); border-radius: 50%; }
.cursor { position: absolute; left: 577px; top: 208px; }
.chart { position: absolute; left: 652px; top: 37px; margin: 0; }
.ct { font: bold 12px Lato, sans-serif; }
.cl { font: 12px Lato, sans-serif; }
.copilot { position: absolute; right: 24px; bottom: 24px; width: 44px; height: 44px; justify-content: center; border-radius: 50%; background: #292929; box-shadow: 0 2px 4px #0008; }
.vscroll { flex: none; width: 21px; display: flex; flex-direction: column; align-items: center; padding: 4px 0 3px 4px; border-right: 5px solid #191110; background: #121212; }
.vscroll .thumb { flex: 1; width: 9px; margin: 5px 0 16px; border-radius: 5px; background: #9a9a9a; }

.sheettabs { flex: none; height: 32px; display: flex; align-items: center; padding-bottom: 2px; background: #14100b; border-top: 1px solid #333; }
.nav { margin-left: 25px; }
.sheettab { align-self: flex-start; height: 27px; width: 56px; justify-content: center; margin-left: 48px; border-radius: 0 0 5px 5px; background: #fff; color: #222; font-size: 13px; font-weight: 600; }
.sheettab span { height: 24px; line-height: 22px; border-bottom: 2px solid #107c41; }
.tabsep { width: 1px; height: 20px; margin-left: 4px; background: #555; }
.add { margin-left: 42px; }
.hscroll { display: flex; align-items: center; width: 44%; margin-left: auto; padding-right: 26px; max-width: 613px; }
.la { margin: 0 5px 0 19px; }
.hthumb { flex: 1; height: 10px; border-radius: 5px; background: #9a9a9a; }
.ra { margin-left: 18px; }
.status { flex: none; height: 22px; display: flex; align-items: center; border-top: 1px solid #333; background: #141414; }
.ready { margin: 0 17px 0 11px; }
.acc { gap: 3px; font-size: 10px; font-weight: 700; }
.disp { gap: 1px; margin-right: 20px; font-size: 10px; }
.view { width: 40px; height: 21px; justify-content: center; }
.view.on { background: #262626; }
.zb { margin: 0 5px; }
.zoom { appearance: none; width: 100px; height: 14px; }
.zoom::-webkit-slider-runnable-track { height: 1px; background: #999; }
.zoom::-webkit-slider-thumb { appearance: none; width: 4px; height: 12px; margin-top: -5px; background: #c4c4c4; }
.pc { margin: 0 9px 0 8px; font-size: 10px; }
</style>
